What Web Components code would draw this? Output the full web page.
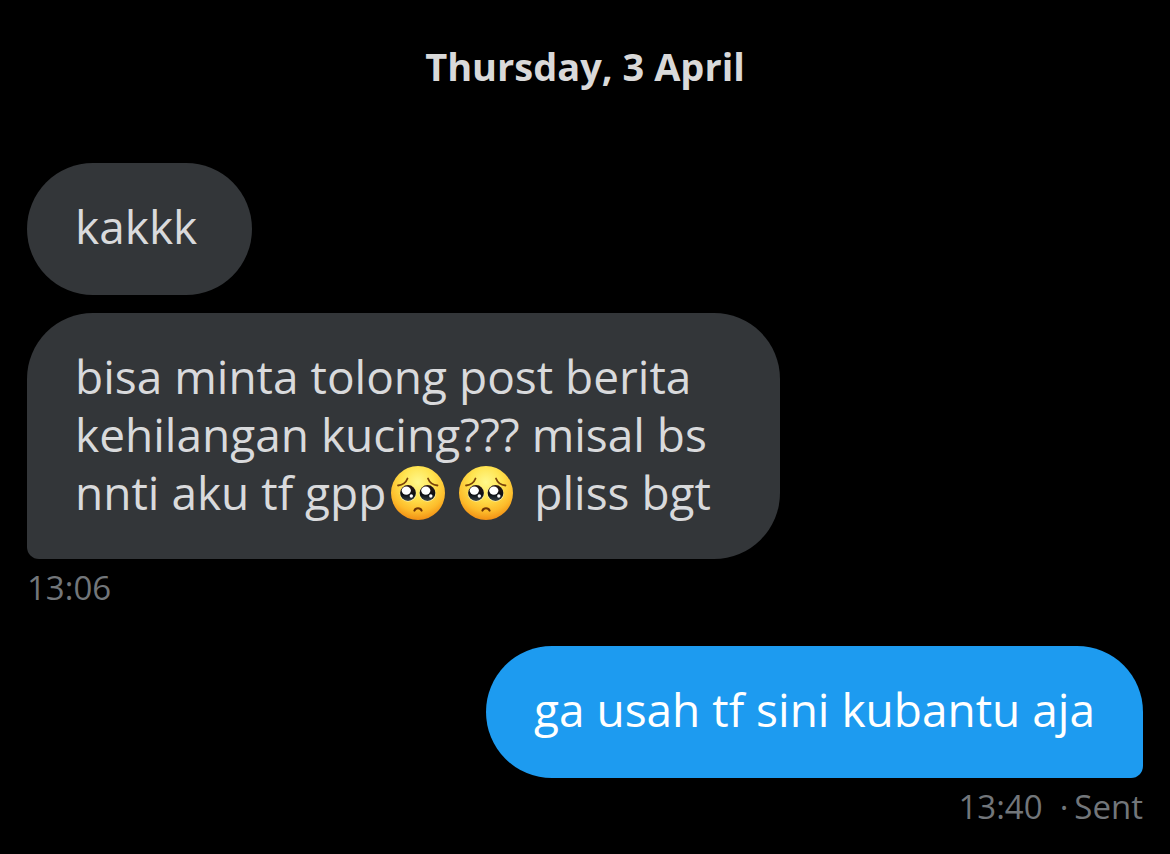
<!DOCTYPE html>
<html lang="id">
<head>
<meta charset="utf-8">
<meta name="viewport" content="width=device-width, initial-scale=1">
<title>Messages</title>
<style>
  body { margin: 0; background: #000; font-family: "Open Sans", "Noto Sans", sans-serif; }
</style>
</head>
<body>
<chat-thread>
  <chat-date>Thursday, 3 April</chat-date>
  <chat-message>kakkk</chat-message>
  <chat-message tail>bisa minta tolong post berita kehilangan kucing??? misal bs <wbr>nnti aku tf gpp<pleading-face></pleading-face><pleading-face></pleading-face> pliss bgt<span slot="meta">13:06</span></chat-message>
  <chat-message tail sent>ga usah tf sini kubantu aja<span slot="meta">13:40 &nbsp;·</span><span slot="meta">Sent</span></chat-message>
</chat-thread>
<script>
class ChatThread extends HTMLElement {
  constructor() {
    super();
    this.attachShadow({ mode: "open" }).innerHTML = `
      <style>
        :host { display: block; }
        main { display: flex; flex-direction: column; gap: 18px; padding: 38px 27px 24px; }
      </style>
      <main><slot></slot></main>`;
  }
}
class ChatDate extends HTMLElement {
  constructor() {
    super();
    this.attachShadow({ mode: "open" }).innerHTML = `
      <style>
        :host { display: block; margin-bottom: 51px; }
        h2 { margin: 0; text-align: center; font-size: 38px; line-height: 56px; font-weight: 700; color: #d9d9d9; }
      </style>
      <h2><slot></slot></h2>`;
  }
}
class ChatMessage extends HTMLElement {
  constructor() {
    super();
    this.attachShadow({ mode: "open" }).innerHTML = `
      <style>
        :host { display: flex; flex-direction: column; align-items: flex-start; }
        :host([sent]) { align-items: flex-end; margin-top: 18px; }
        .bubble {
          box-sizing: border-box; min-width: 225px; max-width: 67.5%; min-height: 132px; padding: 34px 48px 38px;
          border-radius: 66px; background: #333639; color: #d9dadc;
          font-size: 46px; line-height: 58px;
        }
        :host([tail]) .bubble { border-bottom-left-radius: 12px; }
        :host([sent]) .bubble { border-bottom-left-radius: 66px; border-bottom-right-radius: 12px; background: #1d9bf0; color: #fff; }
        .meta { display: none; gap: 6px; padding-top: 7px; font-size: 33px; line-height: 44px; color: #72767a; }
        :host([tail]) .meta { display: flex; }
      </style>
      <div class="bubble"><slot></slot></div>
      <div class="meta"><slot name="meta"></slot></div>`;
  }
}
class PleadingFace extends HTMLElement {
  constructor() {
    super();
    this.attachShadow({ mode: "open" }).innerHTML = `
      <style>
        :host { display: inline-block; height: 54px; margin: 0 9px 0 5px; vertical-align: -10px; line-height: 0; }
        svg { width: 54px; height: 54px; }
      </style>
      <svg viewBox="0 0 54 54" role="img" aria-label="pleading face">
        <defs>
          <radialGradient id="skin" cx=".5" cy=".3" r=".72">
            <stop offset="0" stop-color="#fff88c"/><stop offset=".4" stop-color="#ffe450"/>
            <stop offset=".75" stop-color="#fdbc2b"/><stop offset="1" stop-color="#f08a12"/>
          </radialGradient>
          <linearGradient id="eye" x1="0" y1="0" x2="0" y2="1">
            <stop offset="0" stop-color="#2b1710"/><stop offset=".6" stop-color="#0c0f14"/><stop offset="1" stop-color="#39434a"/>
          </linearGradient>
        </defs>
        <circle cx="27" cy="27" r="27" fill="url(#skin)"/>
        <g fill="none" stroke="#7a4209" stroke-width="1.8" stroke-linecap="round">
          <path d="M7 19.500C11.500 19 15 16.500 16.500 12.500"/>
          <path d="M46.500 19.500C42 19 38.500 16.500 37 12.500"/>
        </g>
        <g>
          <circle cx="17" cy="27.500" r="8.300" fill="#fff0a0"/><circle cx="36.500" cy="27.500" r="8.300" fill="#fff0a0"/>
          <circle cx="17" cy="27" r="7.900" fill="url(#eye)"/><circle cx="36.500" cy="27" r="7.900" fill="url(#eye)"/>
          <ellipse cx="15.300" cy="24.600" rx="4.600" ry="4.200" fill="#fff"/><ellipse cx="34.800" cy="24.600" rx="4.600" ry="4.200" fill="#fff"/>
          <circle cx="20.300" cy="30" r="1.700" fill="#fff"/><circle cx="39.800" cy="30" r="1.700" fill="#fff"/>
        </g>
        <path d="M23.500 44.500C24.500 41.500 29.500 41.500 30.500 44.500" fill="none" stroke="#6d3306" stroke-width="2.200" stroke-linecap="round"/>
      </svg>`;
  }
}
customElements.define("chat-thread", ChatThread);
customElements.define("chat-date", ChatDate);
customElements.define("chat-message", ChatMessage);
customElements.define("pleading-face", PleadingFace);
</script>
</body>
</html>
